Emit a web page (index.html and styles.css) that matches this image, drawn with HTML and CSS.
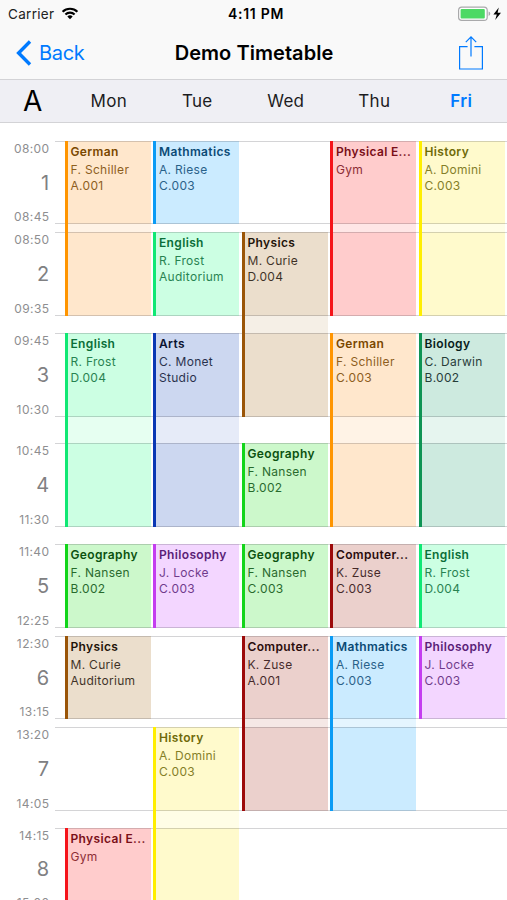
FILE: index.html
```html
<!DOCTYPE html>
<html lang="en">

<head>
  <meta charset="UTF-8">
  <meta name="viewport" content="width=device-width, initial-scale=1.0">
  <title>Demo Timetable</title>
  <link rel="stylesheet" href="styles.css">
</head>

<body>
  <div class="status">
    <div class="carrier">
      <span>Carrier</span>
      <svg class="wifi" width="18" height="13" viewBox="0 0 18 13">
        <path d="M1.6 4.7 A10.6 10.6 0 0 1 16.4 4.7" fill="none" stroke="#000" stroke-width="2.1"/>
        <path d="M4.4 7.5 A6.6 6.6 0 0 1 13.6 7.5" fill="none" stroke="#000" stroke-width="2.1"/>
        <path d="M6.3 9.5 A3.9 3.9 0 0 1 11.7 9.5 L9 12.3 Z" fill="#000"/>
      </svg>
    </div>
    <div class="clock">4:11 PM</div>
    <div class="power">
      <svg width="45" height="16" viewBox="0 0 45 16">
        <rect x=".6" y="1.1" width="28.6" height="13.3" rx="3.2" fill="#fff" stroke="#a9a9ab" stroke-width="1.2"/>
        <rect x="2.6" y="3.1" width="24.2" height="9.3" rx="1" fill="#4cd964"/>
        <path d="M30.6 5.6 Q32.3 6.2 32.3 7.8 Q32.3 9.4 30.6 10 Z" fill="#a9a9ab"/>
        <path d="M40.8 1.6 L35.4 8.6 H38.8 L37.2 14 L43 6.7 H39.6 Z" fill="#000"/>
      </svg>
    </div>
  </div>
  <div class="nav">
    <div class="back">
      <svg width="16" height="26" viewBox="0 0 16 26">
        <path d="M14 1.5 L2.6 13 L14 24.5" fill="none" stroke="#007aff" stroke-width="3.4"/>
      </svg>
      <span>Back</span>
    </div>
    <div class="title">Demo Timetable</div>
    <div class="share">
      <svg width="26" height="36" viewBox="0 0 26 36" fill="none" stroke="#007aff" stroke-width="1.2">
        <path d="M9.6 11.6 H1.6 V34 H24.4 V11.6 H16.4"/>
        <path d="M13 21.5 V2 M7.8 7.2 L13 1.8 L18.2 7.2"/>
      </svg>
    </div>
  </div>
  <div class="days">
    <div class="week">A</div>
    <div>Mon</div>
    <div>Tue</div>
    <div>Wed</div>
    <div>Thu</div>
    <div class="today">Fri</div>
  </div>

  <div class="table">
    <!-- times -->
    <div class="time r1"><span>08:00</span><b>1</b><span>08:45</span></div>
    <div class="time r2"><span>08:50</span><b>2</b><span>09:35</span></div>
    <div class="time r3"><span>09:45</span><b>3</b><span>10:30</span></div>
    <div class="time r4"><span>10:45</span><b>4</b><span>11:30</span></div>
    <div class="time r5"><span>11:40</span><b>5</b><span>12:25</span></div>
    <div class="time r6"><span>12:30</span><b>6</b><span>13:15</span></div>
    <div class="time r7"><span>13:20</span><b>7</b><span>14:05</span></div>
    <div class="time last r8"><span>14:15</span><b>8</b><span>15:00</span></div>

    <!-- period lines, the breaks between them fade the lessons -->
    <div class="line r1"></div>
    <div class="break b1"></div>
    <div class="line r2"></div>
    <div class="break b2"></div>
    <div class="line r3"></div>
    <div class="break b3"></div>
    <div class="line r4"></div>
    <div class="break b4"></div>
    <div class="line r5"></div>
    <div class="break b5"></div>
    <div class="line r6"></div>
    <div class="break b6"></div>
    <div class="line r7"></div>
    <div class="break b7"></div>
    <div class="line r8"></div>

    <!-- Monday -->
    <div class="lesson mon r1-2 german"><h3>German</h3><p>F. Schiller</p><p>A.001</p></div>
    <div class="lesson mon r3-4 english"><h3>English</h3><p>R. Frost</p><p>D.004</p></div>
    <div class="lesson mon r5 geography"><h3>Geography</h3><p>F. Nansen</p><p>B.002</p></div>
    <div class="lesson mon r6 physics"><h3>Physics</h3><p>M. Curie</p><p>Auditorium</p></div>
    <div class="lesson mon r8 sport"><h3>Physical E...</h3><p>Gym</p></div>

    <!-- Tuesday -->
    <div class="lesson tue r1 maths"><h3>Mathmatics</h3><p>A. Riese</p><p>C.003</p></div>
    <div class="lesson tue r2 english"><h3>English</h3><p>R. Frost</p><p>Auditorium</p></div>
    <div class="lesson tue r3-4 arts"><h3>Arts</h3><p>C. Monet</p><p>Studio</p></div>
    <div class="lesson tue r5 philosophy"><h3>Philosophy</h3><p>J. Locke</p><p>C.003</p></div>
    <div class="lesson tue r7-8 history"><h3>History</h3><p>A. Domini</p><p>C.003</p></div>

    <!-- Wednesday -->
    <div class="lesson wed r2-3 physics"><h3>Physics</h3><p>M. Curie</p><p>D.004</p></div>
    <div class="lesson wed r4 geography"><h3>Geography</h3><p>F. Nansen</p><p>B.002</p></div>
    <div class="lesson wed r5 geography"><h3>Geography</h3><p>F. Nansen</p><p>C.003</p></div>
    <div class="lesson wed r6-7 computer"><h3>Computer...</h3><p>K. Zuse</p><p>A.001</p></div>

    <!-- Thursday -->
    <div class="lesson thu r1-2 sport"><h3>Physical E...</h3><p>Gym</p></div>
    <div class="lesson thu r3-4 german"><h3>German</h3><p>F. Schiller</p><p>C.003</p></div>
    <div class="lesson thu r5 computer"><h3>Computer...</h3><p>K. Zuse</p><p>C.003</p></div>
    <div class="lesson thu r6-7 maths"><h3>Mathmatics</h3><p>A. Riese</p><p>C.003</p></div>

    <!-- Friday -->
    <div class="lesson fri r1-2 history"><h3>History</h3><p>A. Domini</p><p>C.003</p></div>
    <div class="lesson fri r3-4 biology"><h3>Biology</h3><p>C. Darwin</p><p>B.002</p></div>
    <div class="lesson fri r5 english"><h3>English</h3><p>R. Frost</p><p>D.004</p></div>
    <div class="lesson fri r6 philosophy"><h3>Philosophy</h3><p>J. Locke</p><p>C.003</p></div>
  </div>
</body>

</html>
```
FILE: styles.css
```css
* {
  box-sizing: border-box;
  margin: 0;
  padding: 0;
}

body {
  width: 507px;
  height: 900px;
  overflow: hidden;
  background-color: #fff;
  font-family: Inter, "Liberation Sans", sans-serif;
  color: #000;
}

svg {
  display: block;
}

/* status bar */
.status {
  display: grid;
  grid-template-columns: 1fr auto 1fr;
  align-items: center;
  height: 27px;
  padding: 0 4px;
  background-color: #f9f9f9;
}

.carrier {
  display: flex;
  align-items: center;
  gap: 7px;
  padding-left: 4px;
  font-size: 13.5px;
  letter-spacing: .3px;
  color: #222;
}

.clock {
  padding-left: 5px;
  font-size: 14px;
  font-weight: 600;
  letter-spacing: .7px;
}

.power {
  justify-self: end;
}

/* navigation bar */
.nav {
  display: grid;
  grid-template-columns: 1fr auto 1fr;
  align-items: center;
  height: 53px;
  padding: 0 23px;
  background-color: #f9f9f9;
  border-bottom: 1px solid #d3d3d6;
}

.back {
  display: flex;
  align-items: center;
  gap: 7px;
  margin-left: -7px;
  font-size: 20px;
  letter-spacing: -.3px;
  color: #007aff;
}

.title {
  padding-left: 1px;
  font-size: 20px;
  font-weight: 600;
  letter-spacing: .05px;
}

.share {
  justify-self: end;
  margin-top: -1px;
}

/* week days */
.days {
  display: grid;
  grid-template-columns: 64.5px repeat(5, 88.5px);
  align-items: center;
  height: 43px;
  background-color: #efeff4;
  border-bottom: 1px solid #d3d3d6;
  text-align: center;
  font-size: 17px;
  letter-spacing: .3px;
  color: #1c1c1e;
}

.week {
  padding-left: 1px;
  font-size: 28px;
  color: #000;
}

.today {
  padding-right: 3px;
  font-weight: 600;
  color: #007aff;
}

/* timetable */
.table {
  display: grid;
  grid-template-columns: 55px 9.5px repeat(5, 88.5px);
  grid-template-rows: 83px 8px 84px 17px 84px 26px 84px 17px 84px 8px 83px 8px 84px 17px 84px;
  padding-top: 18px;
}

.time {
  grid-column: 1;
  display: flex;
  flex-direction: column;
  justify-content: space-between;
  align-items: flex-end;
  margin-bottom: -1px;
  padding-right: 5.5px;
  font-size: 12px;
  line-height: 16px;
  letter-spacing: .4px;
  color: #8e8e90;
}

.time b {
  margin-top: -1px;
  font-size: 20px;
  font-weight: 400;
  color: #808082;
}

.last {
  margin-bottom: 1px;
}

.line {
  grid-column: 2 / -1;
  z-index: 2;
  border-top: 1px solid rgba(60, 60, 67, .22);
  border-bottom: 1px solid rgba(60, 60, 67, .22);
}

.break {
  grid-column: 2 / -1;
  z-index: 2;
  background-color: rgba(255, 255, 255, .5);
}

.lesson {
  position: relative;
  margin-right: 2.5px;
  padding: 2px 0 0 6px;
}

/* the stripe stays solid over the breaks */
.lesson::before {
  content: "";
  position: absolute;
  z-index: 3;
  top: 0;
  bottom: 0;
  left: 0;
  width: 3px;
  background-color: var(--stripe);
}

.lesson h3 {
  margin-bottom: 2px;
  white-space: nowrap;
  font-size: 12px;
  font-weight: 600;
  line-height: 17px;
  letter-spacing: .35px;
}

.lesson p {
  font-size: 12px;
  line-height: 16px;
  letter-spacing: .3px;
  opacity: .85;
}

/* columns */
.mon { grid-column: 3; }
.tue { grid-column: 4; }
.wed { grid-column: 5; }
.thu { grid-column: 6; }
.fri { grid-column: 7; }

/* periods */
.r1 { grid-row: 1; }
.r2 { grid-row: 3; }
.r3 { grid-row: 5; }
.r4 { grid-row: 7; }
.r5 { grid-row: 9; }
.r6 { grid-row: 11; }
.r7 { grid-row: 13; }
.r8 { grid-row: 15; }
.r1-2 { grid-row: 1 / 4; }
.r2-3 { grid-row: 3 / 6; }
.r3-4 { grid-row: 5 / 8; }
.r6-7 { grid-row: 11 / 14; }
.r7-8 { grid-row: 13 / 16; }

.b1 { grid-row: 2; }
.b2 { grid-row: 4; }
.b3 { grid-row: 6; }
.b4 { grid-row: 8; }
.b5 { grid-row: 10; }
.b6 { grid-row: 12; }
.b7 { grid-row: 14; }

/* subjects */
.german {
  --stripe: #ff9500;
  background-color: #ffe7cc;
  color: #7a4700;
}

.maths {
  --stripe: #0a9bf5;
  background-color: #cbebff;
  color: #0b4a75;
}

.english {
  --stripe: #10e874;
  background-color: #ccffe3;
  color: #0a6e38;
}

.physics {
  --stripe: #9a5508;
  background-color: #ebdecc;
  color: #1f1409;
}

.sport {
  --stripe: #f5141a;
  background-color: #ffcccc;
  color: #7a0f18;
}

.history {
  --stripe: #ffee00;
  background-color: #fffacc;
  color: #6f6a08;
}

.arts {
  --stripe: #0a38b4;
  background-color: #ccd7f0;
  color: #0b1330;
}

.biology {
  --stripe: #0f9454;
  background-color: #cdeadf;
  color: #08201a;
}

.geography {
  --stripe: #12d51a;
  background-color: #ccf8cb;
  color: #0b5210;
}

.philosophy {
  --stripe: #c43df0;
  background-color: #f3d6ff;
  color: #5a1e78;
}

.computer {
  --stripe: #9c0a0a;
  background-color: #ebd0cc;
  color: #2a0c0c;
}
```
